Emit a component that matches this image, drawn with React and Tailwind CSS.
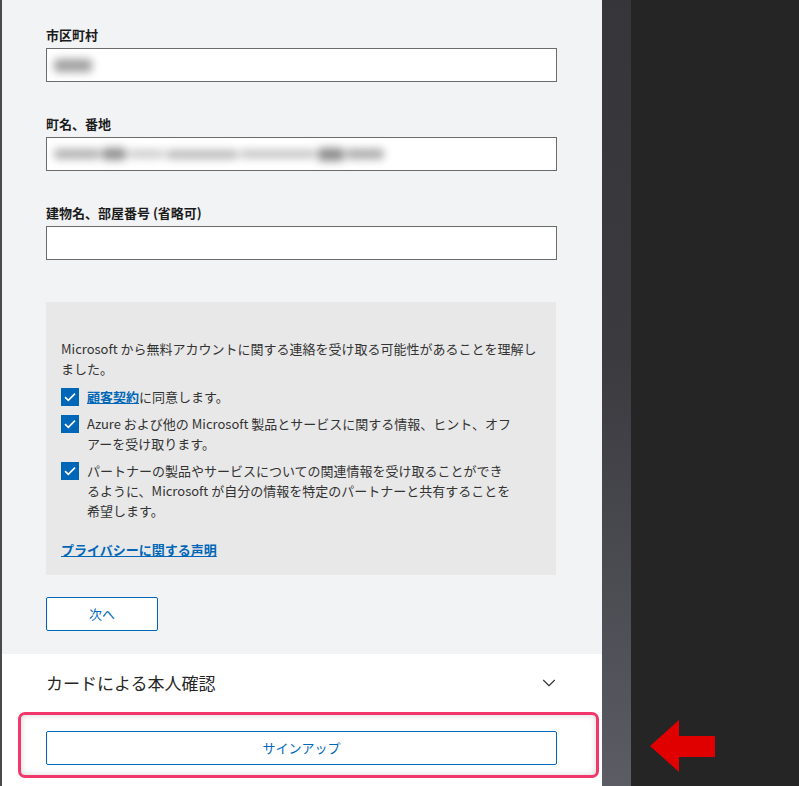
import { ChevronDown } from 'lucide-react';

const font = { fontFamily: '"Noto Sans CJK JP", "Noto Sans", sans-serif' };

function Field({ label, children }) {
  return (
    <div className="mt-[33px] first:mt-0">
      <div className="text-[13px] font-bold leading-[18px] text-[#1b1b1b]">{label}</div>
      <div className="mt-[4px] h-[34px] w-[511px] border border-[#6b6b6b] bg-white relative overflow-hidden flex items-center px-[7px]">
        {children}
      </div>
    </div>
  );
}

function Check({ children }) {
  return (
    <div className="flex items-start gap-[8px]">
      <div className="w-[18px] h-[18px] mt-[1px] bg-[#0067b8] flex items-center justify-center shrink-0">
        <svg width="12" height="10" viewBox="0 0 12 10">
          <path d="M1 5.2 L4.3 8.3 L11 1.6" stroke="white" strokeWidth="1.6" fill="none" />
        </svg>
      </div>
      <div className="leading-[20px] whitespace-nowrap">{children}</div>
    </div>
  );
}

export default function App() {
  return (
    <div className="w-[799px] h-[786px] flex bg-[#252525] overflow-hidden" style={font}>
      {/* main panel */}
      <div className="w-[602px] h-full flex flex-col border-l-2 border-[#4a4a4a]">
        <div className="bg-[#f2f3f5] pl-[44px] pt-[26px] pb-[23px]">
          <Field label="市区町村">
            <div className="h-[13px] w-[38px] rounded bg-[#a0a0a0] blur-[4px]" />
          </Field>
          <Field label="町名、番地">
            <div className="flex items-center gap-[2px] blur-[4px]">
              <div className="h-[10px] w-[46px] rounded bg-[#b0b0b0]" />
              <div className="h-[12px] w-[24px] rounded bg-[#909090]" />
              <div className="h-[8px] w-[36px] rounded bg-[#c8c8c8]" />
              <div className="h-[9px] w-[72px] rounded bg-[#b8b8b8]" />
              <div className="h-[8px] w-[76px] rounded bg-[#c0c0c0]" />
              <div className="h-[13px] w-[26px] rounded bg-[#8c8c8c]" />
              <div className="h-[10px] w-[38px] rounded bg-[#a8a8a8]" />
            </div>
          </Field>
          <Field label="建物名、部屋番号 (省略可)" />

          <div className="mt-[42px] w-[510px] bg-[#e8e8e8] pl-[15px] pt-[37px] pb-[15px] text-[13px] text-[#333]">
            <p className="leading-[20px] whitespace-nowrap">
              Microsoft から無料アカウントに関する連絡を受け取る可能性があることを理解し
              <br />
              ました。
            </p>
            <div className="mt-[8px] flex flex-col gap-[7px]">
              <Check>
                <span className="text-[#0067b8] font-bold underline">顧客契約</span>に同意します。
              </Check>
              <Check>
                Azure および他の Microsoft 製品とサービスに関する情報、ヒント、オフ
                <br />
                アーを受け取ります。
              </Check>
              <Check>
                パートナーの製品やサービスについての関連情報を受け取ることができ
                <br />
                るように、Microsoft が自分の情報を特定のパートナーと共有することを
                <br />
                希望します。
              </Check>
            </div>
            <div className="mt-[19px] leading-[20px] text-[#0067b8] font-bold underline">プライバシーに関する声明</div>
          </div>

          <button className="mt-[22px] w-[112px] h-[34px] border border-[#0067b8] rounded-[2px] bg-white text-[13px] text-[#0067b8]">
            次へ
          </button>
        </div>

        <div className="flex-1 bg-white">
          <div className="pl-[44px] pr-[42px] pt-[17px] flex items-center justify-between">
            <span className="text-[17px] leading-[24px] text-[#262626]">カードによる本人確認</span>
            <ChevronDown size={22} strokeWidth={1.2} className="text-[#333]" />
          </div>
          <div className="ml-[16px] mt-[17px] w-[581px] h-[66px] border-[3px] border-[#f2386b] rounded-[7px] shadow-[inset_0_0_6px_rgba(0,0,0,0.18)] pl-[25px] pt-[16px]">
            <button className="w-[511px] h-[34px] border border-[#0067b8] rounded-[2px] bg-white text-[13px] text-[#0067b8]">
              サインアップ
            </button>
          </div>
        </div>
      </div>

      {/* side strip */}
      <div className="w-[29px] h-full bg-[linear-gradient(to_bottom,#36363a_0%,#3a3a3f_45%,#5b5c64_100%)]" />

      {/* dark area */}
      <div className="flex-1 h-full flex flex-col justify-end pb-[14px] pl-[19px]">
        <svg width="66" height="52" viewBox="0 0 66 52">
          <polygon points="0,26 29,0 29,16 65,16 65,37 29,37 29,52" fill="#e00000" />
        </svg>
      </div>
    </div>
  );
}
